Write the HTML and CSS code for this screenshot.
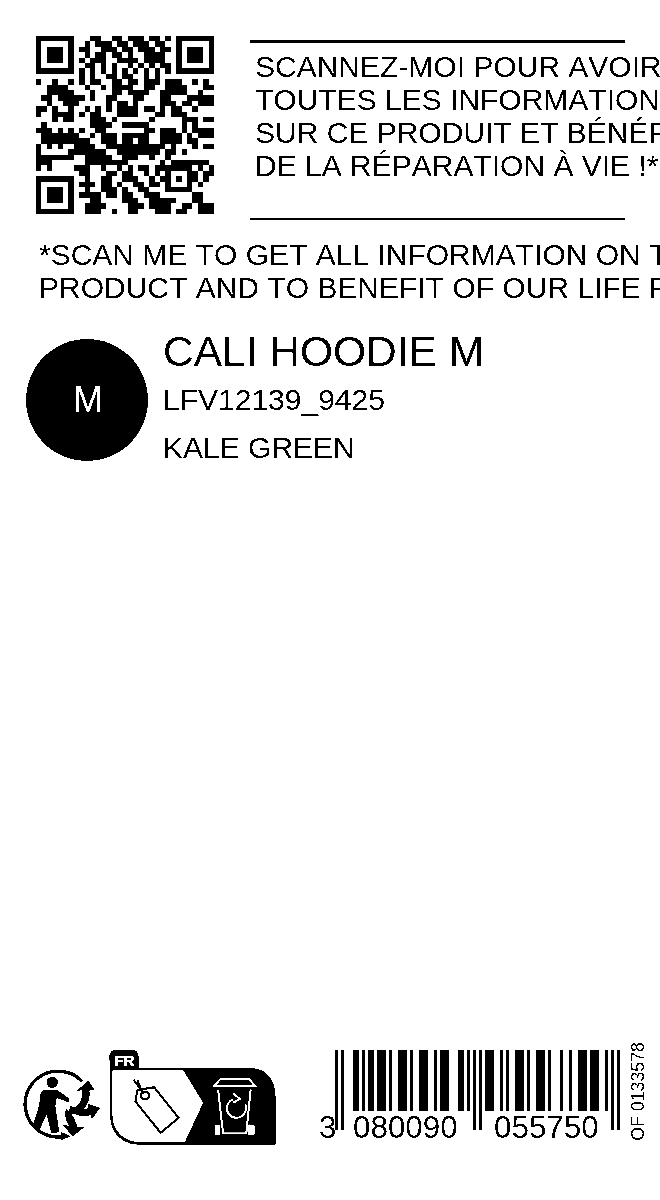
FILE: index.html
```html
<!DOCTYPE html>
<html lang="fr">
<head>
<meta charset="utf-8">
<title>Étiquette produit</title>
<link rel="stylesheet" href="styles.css">
</head>
<body>
<main class="label">
  <section class="scan">
    <svg class="qr" id="qr" viewBox="0 0 33 33" shape-rendering="crispEdges" aria-label="QR code"></svg>
    <div class="scan-copy">
      <p class="fr-copy">SCANNEZ-MOI POUR AVOIR<br>TOUTES LES INFORMATION<br>SUR CE PRODUIT ET BÉNÉF<br>DE LA RÉPARATION À VIE !*</p>
    </div>
  </section>
  <p class="en-copy">*SCAN ME TO GET ALL INFORMATION ON T<br>PRODUCT AND TO BENEFIT OF OUR LIFE F</p>
  <section class="product">
    <div class="size-badge">M</div>
    <div class="product-info">
      <h1 class="product-name">CALI HOODIE M</h1>
      <p class="product-line">LFV12139_9425</p>
      <p class="product-line">KALE GREEN</p>
    </div>
  </section>
  <footer class="footer">
    <svg class="triman" viewBox="0 85 240 240" aria-label="Triman">
      <path class="arc" d="M186 125A99 99 0 1 0 130 291"/>
      <path d="M122 276L152 290L122 302Z"/>
      <circle cx="97" cy="128" r="17"/>
      <path d="M70 150L110 150L149 177L145 188L110 175L106 200L118 278L94 281L80 224L58 272L38 260L58 195L60 165Z"/>
      <path d="M148 210C178 203 190 180 185 152L170 154L205 122L224 152L208 152C214 192 186 228 148 224Z"/>
      <path d="M150 198C170 210 190 210 205 206L204 192L240 205L216 238L212 226C190 234 165 227 148 210Z"/>
      <path d="M138 208C160 222 167 245 172 262L194 262L158 290L128 256L148 258C138 245 132 225 138 208Z"/>
    </svg>
    <svg class="recycle" viewBox="265 25 515 295" aria-label="FR">
      <path d="M268 50C268 38 276 30 290 30L335 30C350 30 356 40 356 55L356 85L690 85C740 85 768 120 768 170L768 316L360 316C305 316 270 280 270 225Z"/>
      <path class="paper" d="M277 92L490 92L550 190L495 308L360 308C312 308 277 275 277 225Z"/>
      <text class="fr-mark" x="284" y="78">FR</text>
      <path class="outline" d="M352 152L402 143L476 235L422 280L346 186Z"/>
      <circle class="outline" cx="375" cy="168" r="12"/>
      <path class="outline" d="M340 120L372 162M352 120L362 148"/>
      <path class="line" d="M584 139L602 118H688L706 139Z"/>
      <path class="line" d="M595 150L610 282H680L693 150"/>
      <path class="paper" d="M585 260C585 256 600 252 600 258V286H585ZM685 258C685 252 705 256 705 260V286H685Z"/>
      <path class="line" d="M640 179A29 29 0 1 0 677 195M640 162L660 178L640 190"/>
    </svg>
    <div class="barcode">
      <svg class="bars" viewBox="0 0 285 80" shape-rendering="crispEdges" aria-label="3080090055750">
        <path d="M0 0h3v80h-3zM6 0h3v80h-3zM138 0h3v80h-3zM144 0h3v80h-3zM276 0h3v80h-3zM282 0h3v80h-3z"/>
        <path d="M18 0h6v61h-6zM27 0h3v61h-3zM33 0h6v61h-6zM42 0h9v61h-9zM54 0h3v61h-3zM63 0h9v61h-9zM75 0h3v61h-3zM84 0h9v61h-9zM99 0h3v61h-3zM105 0h9v61h-9zM123 0h6v61h-6zM132 0h3v61h-3zM150 0h9v61h-9zM165 0h3v61h-3zM171 0h3v61h-3zM180 0h9v61h-9zM192 0h3v61h-3zM201 0h9v61h-9zM213 0h3v61h-3zM225 0h3v61h-3zM234 0h3v61h-3zM243 0h9v61h-9zM255 0h9v61h-9zM270 0h3v61h-3z"/>
      </svg>
      <span class="digit-first">3</span>
      <span class="digit-left">080090</span>
      <span class="digit-right">055750</span>
    </div>
    <span class="batch">OF 0133578</span>
  </footer>
</main>
<script src="script.js"></script>
</body>
</html>
```
FILE: styles.css
```css
html, body {
  margin: 0;
  background: #fff;
}
.label {
  position: relative;
  width: 660px;
  height: 1200px;
  overflow: hidden;
  display: flex;
  flex-direction: column;
  background: #fff;
  color: #000;
  font-family: "Liberation Sans", Arial, sans-serif;
  font-kerning: none;
  filter: contrast(100);
}
p, h1 { margin: 0; font-weight: 400; white-space: nowrap; }

.scan {
  display: flex;
  gap: 36px;
  padding: 36px 0 0 36px;
}
.qr { width: 178px; height: 178px; flex: none; }
.scan-copy {
  flex: none;
  width: 375px;
  height: 180px;
  margin-top: 4px;
  box-sizing: border-box;
  border-top: 3px solid #000;
  border-bottom: 2px solid #000;
  padding: 7px 0 0 5px;
}
.fr-copy { font-size: 30px; line-height: 33px; }
.en-copy { font-size: 30px; line-height: 33px; margin: 18px 0 0 39px; }

.product {
  display: flex;
  gap: 15px;
  margin: 35px 0 0 26px;
}
.size-badge {
  width: 122px;
  height: 122px;
  padding-left: 2px;
  box-sizing: border-box;
  border-radius: 50%;
  background: #000;
  color: #fff;
  font-size: 36px;
  display: flex;
  align-items: center;
  justify-content: center;
  flex: none;
}
.product-info { margin-top: -11px; }
.product-name { font-size: 42.5px; line-height: 48px; }
.product-line { font-size: 30px; line-height: 48px; }

.footer {
  margin-top: auto;
  height: 160px;
  display: flex;
  align-items: flex-start;
  padding-left: 20px;
}
.triman { width: 80px; height: 80px; margin-top: 28px; flex: none; }
.triman .arc { fill: none; stroke: #000; stroke-width: 10; }
.recycle { width: 172px; height: 98px; margin: 8px 0 0 8px; flex: none; }
.paper { fill: #fff; }
.fr-mark { fill: #fff; stroke: #fff; stroke-width: 1.5; font: 700 44px "Liberation Sans", sans-serif; }
.outline { fill: none; stroke: #000; stroke-width: 6; }
.line { fill: none; stroke: #fff; stroke-width: 6; }

.barcode { position: relative; width: 285px; height: 80px; margin: 10px 0 0 55px; flex: none; }
.bars { display: block; width: 285px; height: 80px; }
.barcode span {
  position: absolute;
  top: 60px;
  font-size: 31.4px;
  line-height: 36px;
  white-space: nowrap;
}
.digit-first { left: -16px; }
.digit-left { left: 18px; }
.digit-right { left: 159px; }
.batch {
  writing-mode: vertical-rl;
  transform: rotate(180deg);
  font-size: 17.8px;
  line-height: 21px;
  margin: 2px 0 0 8px;
  white-space: nowrap;
}
```
FILE: script.js
```js
var rows = [
"111111100011001101110110101111111",
"100000100101110110111011001000001",
"101110101100111011011101101011101",
"101110100101101101001111001011101",
"101110101011100111101111001011101",
"100000100110101001010101101000001",
"111111101010101010101010101111111",
"000000001010011011001010000000000",
"100100101011001101101110111001010",
"001111000100101111001100111100011",
"001111100010001101111001111100100",
"011011111010011000110001100011111",
"001001110000010110100001110110111",
"110100100101010111101101011001000",
"100111101011000111100011011100000",
"000101100011101000000100000111011",
"010000000011110011111000000101000",
"111010101001100000001101110101111",
"011111110010111011111001111010111",
"011111111100111011011001111011000",
"101010011110011111111111010001011",
"100000111111100111111110110100000",
"111111100111110011100100100000000",
"111000000111111110000001011111110",
"101000011100100101011011111110101",
"000000001100011011001010100011011",
"111111100100110011100101101011010",
"100000101110110100110110100010100",
"101110100100111010011000111110000",
"101110101111011011001110000001100",
"101110100011000011100111110001100",
"100000100111100001110111100110111",
"111111100111001001100011101100111"
];
var d = "";
rows.forEach(function (row, y) {
  row.split("").forEach(function (c, x) {
    if (c === "1") d += "M" + x + " " + y + "h1v1h-1z";
  });
});
var path = document.createElementNS("http://www.w3.org/2000/svg", "path");
path.setAttribute("d", d);
document.getElementById("qr").appendChild(path);
```
